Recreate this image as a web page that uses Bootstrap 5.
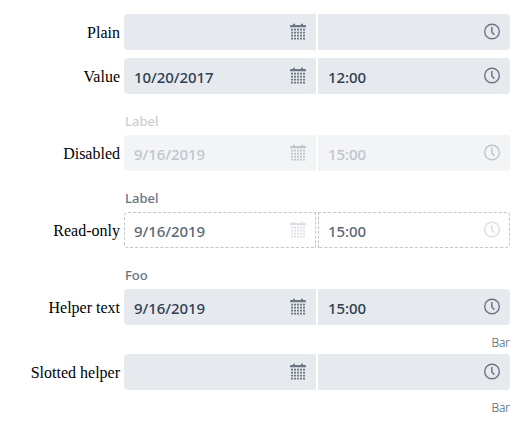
<!DOCTYPE html>
<html lang="en">
<head>
<meta charset="utf-8">
<title>Date time picker</title>
<link href="https://cdn.jsdelivr.net/npm/bootstrap@5.3.0/dist/css/bootstrap.min.css" rel="stylesheet">
<style>
body { width: 520px; height: 426px; overflow: hidden; background: #fff; padding: 14px 10px 0 0; }
.picker-row { display: grid; grid-template-columns: 120px 1fr; column-gap: 4px; margin-bottom: 8px; }
.picker-name { font: 16px/38px "Liberation Serif", serif; color: #000; height: 36px; white-space: nowrap; }
.picker-label { grid-column: 2; height: 33px; padding: 9px 0 0 1px; font: 500 13px/20px "Noto Sans", sans-serif; color: #69717f; }
.picker-help { grid-column: 2; height: 21px; font: 300 12px/18px "Open Sans", sans-serif; padding-top: 9px; color: #26364a; }
.picker-fields { gap: 2px; }
.field { height: 36px; padding: 0 10px; background: #e6e9ed; color: #2f3e50; font: 500 15px/20px "Noto Sans", sans-serif; letter-spacing: -.06px; }
.field span { padding-top: 1px; }
.field:first-child { border-radius: 4px 0 0 4px; }
.field:last-child { border-radius: 0 4px 4px 0; }
.field svg { color: #6c7685; }
.is-off .picker-label { color: #cfcdd2; }
.is-off .field { background: #f3f4f6; color: #bfc5ce; }
.is-off .field svg { color: #bfc5ce; }
.is-locked .field { background: #fff; border: 1px dashed #c0c6cf; padding: 0 9px; color: #5b6777; }
.is-locked .field svg { color: #dce0e5; }
</style>
<script src="https://cdn.jsdelivr.net/npm/bootstrap@5.3.0/dist/js/bootstrap.bundle.min.js"></script>
</head>
<body>
<svg class="d-none">
  <symbol id="calendar" viewBox="0 0 16 18">
    <path fill="currentColor" d="M0 3q0-1 1-1h2V.8h2V2h6V.8h2V2h2q1 0 1 1v1.3H0z"/>
    <path stroke="currentColor" stroke-width="1.8" stroke-dasharray="2 1" d="M1 6.6h14M1 9.6h14M1 12.6h14M1 15.6h14"/>
  </symbol>
  <symbol id="clock" viewBox="0 0 16 18">
    <circle cx="8" cy="8.5" r="7.3" fill="none" stroke="currentColor" stroke-width="1.4"/>
    <path d="M7.8 4v4.7l2.5 3" fill="none" stroke="currentColor" stroke-width="1.5"/>
  </symbol>
</svg>
<main>
  <div class="picker-row">
    <div class="picker-name text-end">Plain</div>
    <div class="picker-fields d-flex">
      <div class="field flex-fill w-50 d-flex align-items-center justify-content-between"><span></span><svg width="16" height="18"><use href="#calendar"/></svg></div>
      <div class="field flex-fill w-50 d-flex align-items-center justify-content-between"><span></span><svg width="16" height="18"><use href="#clock"/></svg></div>
    </div>
  </div>
  <div class="picker-row">
    <div class="picker-name text-end">Value</div>
    <div class="picker-fields d-flex">
      <div class="field flex-fill w-50 d-flex align-items-center justify-content-between"><span>10/20/2017</span><svg width="16" height="18"><use href="#calendar"/></svg></div>
      <div class="field flex-fill w-50 d-flex align-items-center justify-content-between"><span>12:00</span><svg width="16" height="18"><use href="#clock"/></svg></div>
    </div>
  </div>
  <div class="picker-row is-off">
    <div class="picker-label">Label</div>
    <div class="picker-name text-end">Disabled</div>
    <div class="picker-fields d-flex">
      <div class="field flex-fill w-50 d-flex align-items-center justify-content-between"><span>9/16/2019</span><svg width="16" height="18"><use href="#calendar"/></svg></div>
      <div class="field flex-fill w-50 d-flex align-items-center justify-content-between"><span>15:00</span><svg width="16" height="18"><use href="#clock"/></svg></div>
    </div>
  </div>
  <div class="picker-row is-locked">
    <div class="picker-label">Label</div>
    <div class="picker-name text-end">Read-only</div>
    <div class="picker-fields d-flex">
      <div class="field flex-fill w-50 d-flex align-items-center justify-content-between"><span>9/16/2019</span><svg width="16" height="18"><use href="#calendar"/></svg></div>
      <div class="field flex-fill w-50 d-flex align-items-center justify-content-between"><span>15:00</span><svg width="16" height="18"><use href="#clock"/></svg></div>
    </div>
  </div>
  <div class="picker-row">
    <div class="picker-label">Foo</div>
    <div class="picker-name text-end">Helper text</div>
    <div class="picker-fields d-flex">
      <div class="field flex-fill w-50 d-flex align-items-center justify-content-between"><span>9/16/2019</span><svg width="16" height="18"><use href="#calendar"/></svg></div>
      <div class="field flex-fill w-50 d-flex align-items-center justify-content-between"><span>15:00</span><svg width="16" height="18"><use href="#clock"/></svg></div>
    </div>
    <div class="picker-help text-end">Bar</div>
  </div>
  <div class="picker-row">
    <div class="picker-name text-end">Slotted helper</div>
    <div class="picker-fields d-flex">
      <div class="field flex-fill w-50 d-flex align-items-center justify-content-between"><span></span><svg width="16" height="18"><use href="#calendar"/></svg></div>
      <div class="field flex-fill w-50 d-flex align-items-center justify-content-between"><span></span><svg width="16" height="18"><use href="#clock"/></svg></div>
    </div>
    <div class="picker-help text-end">Bar</div>
  </div>
</main>
</body>
</html>
